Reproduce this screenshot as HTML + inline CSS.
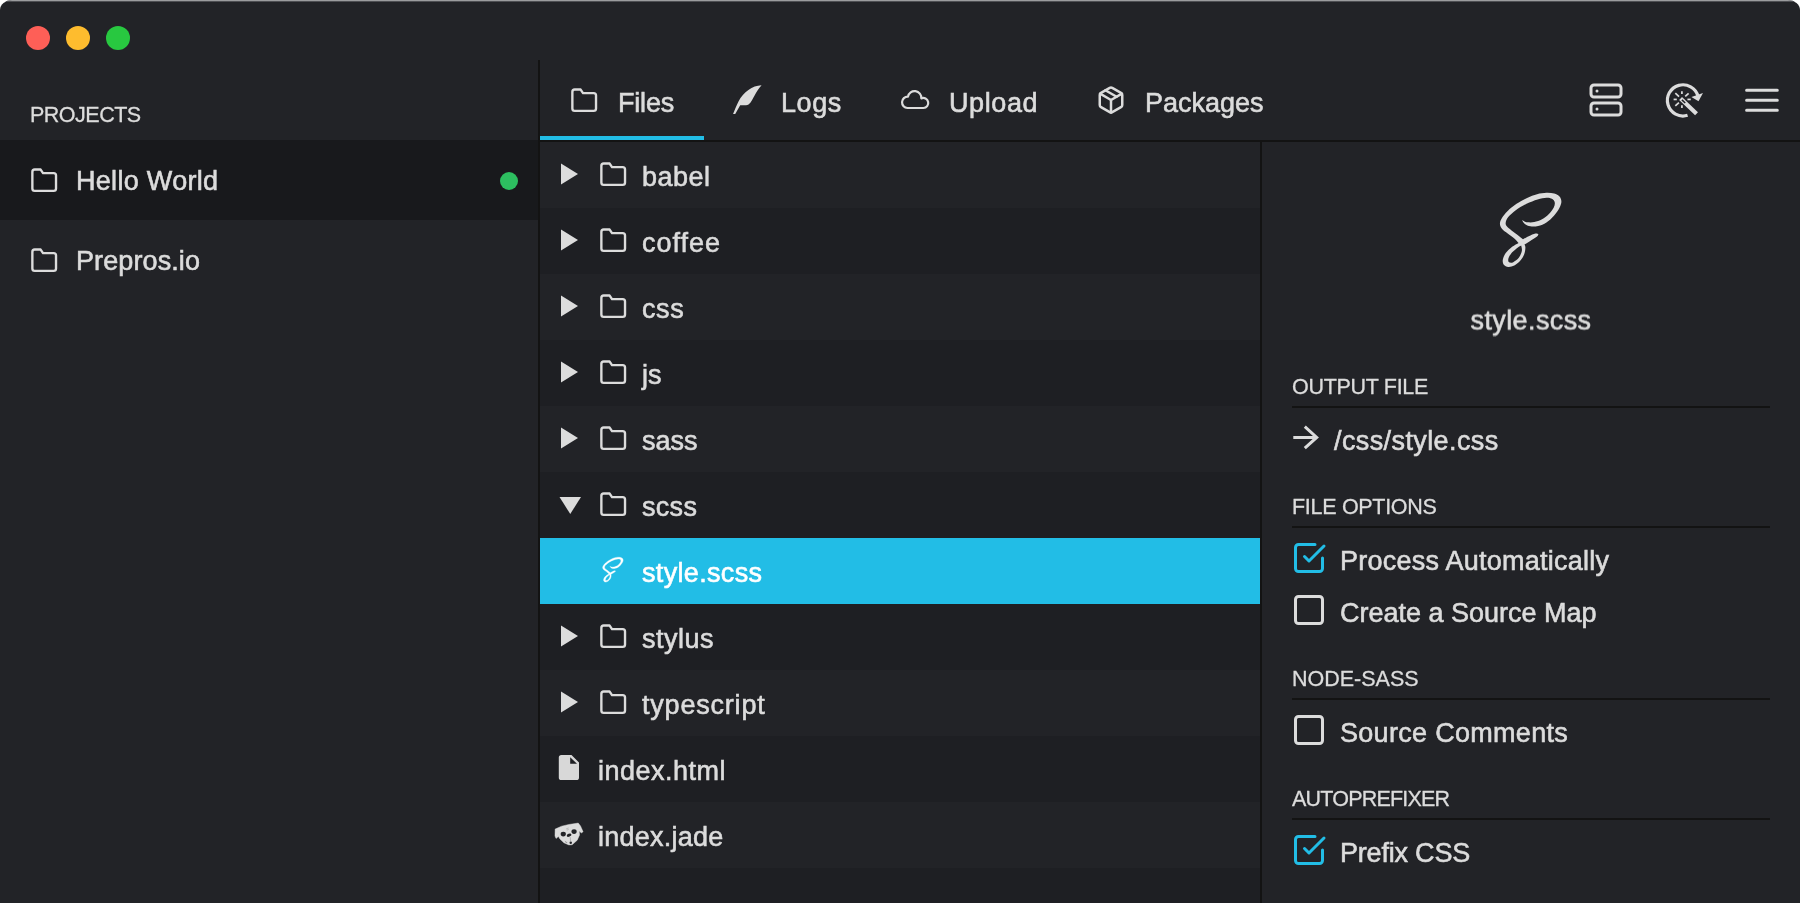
<!DOCTYPE html>
<html lang="en">
<head>
<meta charset="utf-8">
<title>Prepros</title>
<style>
*{box-sizing:border-box;margin:0;padding:0}
html,body{width:1800px;height:903px;overflow:hidden;background:#fff}
body{font-family:"Liberation Sans",sans-serif;color:#dcdcdc;position:relative;font-size:27px;-webkit-text-stroke:0.6px #dcdcdc}
#win{will-change:transform;position:absolute;left:0;top:0;width:1800px;height:920px;background:#222327;border-radius:12px 12px 0 0/10px 10px 0 0;overflow:hidden}
#win:before{content:"";position:absolute;left:0;top:0;width:100%;height:2px;background:linear-gradient(#9b9c9e 0,#9b9c9e 1px,#4e4f53 1px,#4e4f53 2px);z-index:5;pointer-events:none}
.abs{position:absolute}
.t,.opt,.plabel,.sec span,.ctr{transform:translateY(.55px) rotate(.001deg)}
.sec span{display:inline-block}
svg{position:absolute;overflow:visible}
.tl{position:absolute;top:26px;width:24px;height:24px;border-radius:50%}
#side{position:absolute;left:0;top:0;width:538px;height:920px}
#vd1{position:absolute;left:538px;top:60px;width:2px;height:860px;background:#131313}
#vd2{position:absolute;left:1260px;top:142px;width:2px;height:780px;background:#131313}
#hd{position:absolute;left:540px;top:140px;width:1260px;height:2px;background:#131313}
#tabbar{position:absolute;left:540px;top:136px;width:164px;height:4px;background:#22bde6}
.plabel{-webkit-text-stroke-width:.3px;position:absolute;left:30px;top:102px;font-size:21.5px;line-height:24px;letter-spacing:-.5px}
.proj{position:absolute;left:0;width:538px;height:80px}
.proj.sel{background:#18191c}
.proj .t{position:absolute;left:76px;top:24px;line-height:32px;font-size:27px;white-space:nowrap}
.dot{position:absolute;left:499.8px;top:31.7px;width:18.4px;height:18.4px;border-radius:50%;background:#2dbe60}
.tab{position:absolute;top:60px;height:76px}
.tab .t{position:absolute;top:26px;line-height:32px;font-size:27px;white-space:nowrap}
.row{position:absolute;left:540px;width:720px;height:66px}
.row.d{background:#1e1f23}
.row.s{background:#22bde6;color:#fff;-webkit-text-stroke-color:#fff}
.row .t{position:absolute;left:102px;top:18px;line-height:32px;font-size:27px;white-space:nowrap}
.row .f{left:58px}
.sec{-webkit-text-stroke-width:.3px;position:absolute;left:1292px;width:478px;font-size:21.5px;line-height:24px;white-space:nowrap}
.sec i{position:absolute;left:0;top:32px;width:478px;height:2px;background:#131313;display:block}
.opt{position:absolute;left:1340px;font-size:27px;line-height:32px;white-space:nowrap}
.cb{left:1290.8px}
</style>
</head>
<body>
<div id="win">
  <div id="side">
    <div class="tl" style="left:26px;background:#fe5f57"></div>
    <div class="tl" style="left:66px;background:#febc2e"></div>
    <div class="tl" style="left:106px;background:#28c840"></div>
    <div class="plabel">PROJECTS</div>
    <div class="proj sel" style="top:140px">
      <svg  width="28.4" height="28.4" viewBox="0 0 24 24" style="left:29.82px;top:25.64px"><path d="M22 19a2 2 0 0 1-2 2H4a2 2 0 0 1-2-2V5a2 2 0 0 1 2-2h5l2 3h9a2 2 0 0 1 2 2z" fill="none" stroke="#dcdcdc" stroke-width="2" stroke-linecap="round" stroke-linejoin="round"/></svg>
      <div class="t" style="letter-spacing:.3px">Hello World</div>
      <div class="dot"></div>
    </div>
    <div class="proj" style="top:220px">
      <svg  width="28.4" height="28.4" viewBox="0 0 24 24" style="left:29.82px;top:25.64px"><path d="M22 19a2 2 0 0 1-2 2H4a2 2 0 0 1-2-2V5a2 2 0 0 1 2-2h5l2 3h9a2 2 0 0 1 2 2z" fill="none" stroke="#dcdcdc" stroke-width="2" stroke-linecap="round" stroke-linejoin="round"/></svg>
      <div class="t" style="letter-spacing:.1px">Prepros.io</div>
    </div>
  </div>
  <div id="vd1"></div>
  <div class="tab" style="left:540px;width:164px"><svg class="fo" width="28.4" height="28.4" viewBox="0 0 24 24" style="left:29.82px;top:25.54px"><path d="M22 19a2 2 0 0 1-2 2H4a2 2 0 0 1-2-2V5a2 2 0 0 1 2-2h5l2 3h9a2 2 0 0 1 2 2z" fill="none" stroke="#dcdcdc" stroke-width="2" stroke-linecap="round" stroke-linejoin="round"/></svg><div class="t" style="left:78px;letter-spacing:-.2px">Files</div></div>
  <div class="tab" style="left:704px;width:160px"><svg width="60" height="50" viewBox="0 0 1084 903" style="left:16px;top:15px"><path d="M748 186 C 585 190, 425 312, 334 478 C 296 550, 262 640, 236 705 L 275 705 L 365 548 L 470 548 C 540 545, 570 470, 620 380 C 660 300, 700 240, 748 188 Z" fill="#dcdcdc"/></svg><div class="t" style="left:77px;letter-spacing:.6px">Logs</div></div>
  <div class="tab" style="left:864px;width:200px"><svg width="40" height="30" viewBox="0 0 40 30" style="left:34px;top:20px"><path d="M9.5 28A5.7 5.7 0 0 1 10 16.6A6.72 6.72 0 0 1 23.3 18.4A5 5 0 1 1 25.4 28Z" fill="none" stroke="#dcdcdc" stroke-width="2.2" stroke-linejoin="round"/></svg><div class="t" style="left:85px;letter-spacing:.6px">Upload</div></div>
  <div class="tab" style="left:1064px;width:230px"><svg width="30" height="30" viewBox="0 0 24 24" style="left:31.9px;top:25.25px" fill="none" stroke="#dcdcdc" stroke-width="2" stroke-linecap="round" stroke-linejoin="round"><line x1="16.5" y1="9.4" x2="7.5" y2="4.21"/><path d="M21 16V8a2 2 0 0 0-1-1.730l-7-4a2 2 0 0 0-2 0l-7 4A2 2 0 0 0 3 8v8a2 2 0 0 0 1 1.730l7 4a2 2 0 0 0 2 0l7-4A2 2 0 0 0 21 16z"/><polyline points="3.27 6.96 12 12.01 20.73 6.96"/><line x1="12" y1="22.08" x2="12" y2="12"/></svg><div class="t" style="left:81px">Packages</div></div>
  <svg width="36" height="36" viewBox="0 0 24 24" style="left:1588px;top:82.3px" fill="none" stroke="#dcdcdc" stroke-width="2" stroke-linecap="round" stroke-linejoin="round"><rect x="2" y="2" width="20" height="8" rx="2" ry="2"/><rect x="2" y="14" width="20" height="8" rx="2" ry="2"/><line x1="6" y1="6" x2="6.010" y2="6"/><line x1="6" y1="18" x2="6.010" y2="18"/></svg><svg width="60" height="60" viewBox="0 0 903 903" style="left:1655px;top:70px" fill="none" stroke="#dcdcdc">
<path d="M490 682 A235 235 0 1 1 648 395" stroke-width="48"/>
<path d="M722 345L548 405L655 472z" fill="#dcdcdc" stroke="none"/>
<path d="M385 430L625 660" stroke-width="62"/>
<path d="M405 450L455 497" stroke="#222327" stroke-width="22"/>
<g stroke-width="26"><path d="M405 318V360"/><path d="M405 530V572"/><path d="M280 443H328"/><path d="M488 443H538"/><path d="M306 348L362 400"/><path d="M506 350L455 398"/><path d="M306 540L360 492"/></g>
</svg><svg width="60" height="60" viewBox="0 0 60 60" style="left:1730px;top:70px" stroke="#dcdcdc" stroke-width="3" stroke-linecap="round"><path d="M16.6 20.3H47.3M16.6 30.2H47.3M16.6 40.2H47.3"/></svg>
  <div id="tabbar"></div>
  <div id="hd"></div>
  <div class="row " style="top:142px"><svg width="20" height="26" viewBox="0 0 20 26" style="left:20.4px;top:19.5px"><path d="M1 1.4L18 12L1 22.6z" fill="#dcdcdc"/></svg><svg class="fo" width="28.4" height="28.4" viewBox="0 0 24 24" style="left:58.82px;top:17.64px"><path d="M22 19a2 2 0 0 1-2 2H4a2 2 0 0 1-2-2V5a2 2 0 0 1 2-2h5l2 3h9a2 2 0 0 1 2 2z" fill="none" stroke="#dcdcdc" stroke-width="2" stroke-linecap="round" stroke-linejoin="round"/></svg><div class="t" style="letter-spacing:0.5px">babel</div></div>
  <div class="row d" style="top:208px"><svg width="20" height="26" viewBox="0 0 20 26" style="left:20.4px;top:19.5px"><path d="M1 1.4L18 12L1 22.6z" fill="#dcdcdc"/></svg><svg class="fo" width="28.4" height="28.4" viewBox="0 0 24 24" style="left:58.82px;top:17.64px"><path d="M22 19a2 2 0 0 1-2 2H4a2 2 0 0 1-2-2V5a2 2 0 0 1 2-2h5l2 3h9a2 2 0 0 1 2 2z" fill="none" stroke="#dcdcdc" stroke-width="2" stroke-linecap="round" stroke-linejoin="round"/></svg><div class="t" style="letter-spacing:1.0px">coffee</div></div>
  <div class="row " style="top:274px"><svg width="20" height="26" viewBox="0 0 20 26" style="left:20.4px;top:19.5px"><path d="M1 1.4L18 12L1 22.6z" fill="#dcdcdc"/></svg><svg class="fo" width="28.4" height="28.4" viewBox="0 0 24 24" style="left:58.82px;top:17.64px"><path d="M22 19a2 2 0 0 1-2 2H4a2 2 0 0 1-2-2V5a2 2 0 0 1 2-2h5l2 3h9a2 2 0 0 1 2 2z" fill="none" stroke="#dcdcdc" stroke-width="2" stroke-linecap="round" stroke-linejoin="round"/></svg><div class="t" style="letter-spacing:0.6px">css</div></div>
  <div class="row d" style="top:340px"><svg width="20" height="26" viewBox="0 0 20 26" style="left:20.4px;top:19.5px"><path d="M1 1.4L18 12L1 22.6z" fill="#dcdcdc"/></svg><svg class="fo" width="28.4" height="28.4" viewBox="0 0 24 24" style="left:58.82px;top:17.64px"><path d="M22 19a2 2 0 0 1-2 2H4a2 2 0 0 1-2-2V5a2 2 0 0 1 2-2h5l2 3h9a2 2 0 0 1 2 2z" fill="none" stroke="#dcdcdc" stroke-width="2" stroke-linecap="round" stroke-linejoin="round"/></svg><div class="t" style="letter-spacing:0px">js</div></div>
  <div class="row " style="top:406px"><svg width="20" height="26" viewBox="0 0 20 26" style="left:20.4px;top:19.5px"><path d="M1 1.4L18 12L1 22.6z" fill="#dcdcdc"/></svg><svg class="fo" width="28.4" height="28.4" viewBox="0 0 24 24" style="left:58.82px;top:17.64px"><path d="M22 19a2 2 0 0 1-2 2H4a2 2 0 0 1-2-2V5a2 2 0 0 1 2-2h5l2 3h9a2 2 0 0 1 2 2z" fill="none" stroke="#dcdcdc" stroke-width="2" stroke-linecap="round" stroke-linejoin="round"/></svg><div class="t" style="letter-spacing:0px">sass</div></div>
  <div class="row d" style="top:472px"><svg width="24" height="20" viewBox="0 0 24 20" style="left:19px;top:24px"><path d="M.5 1H22L11.25 18z" fill="#dcdcdc"/></svg><svg class="fo" width="28.4" height="28.4" viewBox="0 0 24 24" style="left:58.82px;top:17.64px"><path d="M22 19a2 2 0 0 1-2 2H4a2 2 0 0 1-2-2V5a2 2 0 0 1 2-2h5l2 3h9a2 2 0 0 1 2 2z" fill="none" stroke="#dcdcdc" stroke-width="2" stroke-linecap="round" stroke-linejoin="round"/></svg><div class="t" style="letter-spacing:0.3px">scss</div></div>
  <div class="row s" style="top:538px"><svg class="abs" width="33.33" height="33.33" viewBox="0 0 903 903" style="left:56.07px;top:15.47px"><path d="M378.0 362.0C382.5 368.0 392.2 388.7 405.0 398.0C417.8 407.3 435.0 415.2 455.0 418.0C475.0 420.8 500.8 420.8 525.0 415.0C549.2 409.2 576.2 398.5 600.0 383.0C623.8 367.5 648.3 344.2 668.0 322.0C687.7 299.8 706.8 271.2 718.0 250.0C729.2 228.8 735.0 212.0 735.0 195.0C735.0 178.0 728.8 160.2 718.0 148.0C707.2 135.8 689.7 127.5 670.0 122.0C650.3 116.5 625.8 114.0 600.0 115.0C574.2 116.0 544.2 120.2 515.0 128.0C485.8 135.8 455.8 147.5 425.0 162.0C394.2 176.5 359.2 195.3 330.0 215.0C300.8 234.7 272.2 258.3 250.0 280.0C227.8 301.7 208.7 325.8 197.0 345.0C185.3 364.2 179.8 379.2 180.0 395.0C180.2 410.8 186.3 425.3 198.0 440.0C209.7 454.7 231.3 468.3 250.0 483.0C268.7 497.7 293.7 513.8 310.0 528.0C326.3 542.2 341.7 561.3 348.0 568.0C338.3 573.8 309.3 587.7 290.0 603.0C270.7 618.3 246.0 640.5 232.0 660.0C218.0 679.5 208.8 702.5 206.0 720.0C203.2 737.5 206.8 754.2 215.0 765.0C223.2 775.8 239.2 783.7 255.0 785.0C270.8 786.3 291.7 782.5 310.0 773.0C328.3 763.5 350.0 745.5 365.0 728.0C380.0 710.5 392.5 687.7 400.0 668.0C407.5 648.3 409.7 624.3 410.0 610.0C410.3 595.7 403.3 586.7 402.0 582.0C410.0 577.0 431.2 564.0 450.0 552.0C468.8 540.0 502.2 520.8 515.0 510.0C527.8 499.2 525.0 490.8 527.0 487.0C522.5 486.3 514.5 479.7 500.0 483.0C485.5 486.3 458.7 498.3 440.0 507.0C421.3 515.7 396.7 530.3 388.0 535.0C380.0 528.7 357.2 510.3 340.0 497.0C322.8 483.7 301.3 468.2 285.0 455.0C268.7 441.8 250.8 429.7 242.0 418.0C233.2 406.3 229.8 398.8 232.0 385.0C234.2 371.2 240.3 353.3 255.0 335.0C269.7 316.7 292.5 295.0 320.0 275.0C347.5 255.0 386.7 231.7 420.0 215.0C453.3 198.3 490.0 184.2 520.0 175.0C550.0 165.8 578.3 160.8 600.0 160.0C621.7 159.2 637.5 162.8 650.0 170.0C662.5 177.2 672.5 189.7 675.0 203.0C677.5 216.3 674.2 232.2 665.0 250.0C655.8 267.8 637.5 292.5 620.0 310.0C602.5 327.5 581.7 343.3 560.0 355.0C538.3 366.7 511.7 375.5 490.0 380.0C468.3 384.5 445.3 383.3 430.0 382.0C414.7 380.7 406.7 375.3 398.0 372.0C389.3 368.7 381.3 363.7 378.0 362.0ZM372.0 592.0C373.0 600.0 381.3 622.0 378.0 640.0C374.7 658.0 365.0 683.0 352.0 700.0C339.0 717.0 315.0 735.0 300.0 742.0C285.0 749.0 269.3 747.0 262.0 742.0C254.7 737.0 253.0 724.8 256.0 712.0C259.0 699.2 267.7 680.7 280.0 665.0C292.3 649.3 314.7 630.2 330.0 618.0C345.3 605.8 365.0 596.3 372.0 592.0Z" fill="#fff" fill-rule="evenodd" stroke="#fff" stroke-width="10"/></svg><div class="t" style="letter-spacing:0.33px">style.scss</div></div>
  <div class="row d" style="top:604px"><svg width="20" height="26" viewBox="0 0 20 26" style="left:20.4px;top:19.5px"><path d="M1 1.4L18 12L1 22.6z" fill="#dcdcdc"/></svg><svg class="fo" width="28.4" height="28.4" viewBox="0 0 24 24" style="left:58.82px;top:17.64px"><path d="M22 19a2 2 0 0 1-2 2H4a2 2 0 0 1-2-2V5a2 2 0 0 1 2-2h5l2 3h9a2 2 0 0 1 2 2z" fill="none" stroke="#dcdcdc" stroke-width="2" stroke-linecap="round" stroke-linejoin="round"/></svg><div class="t" style="letter-spacing:0.5px">stylus</div></div>
  <div class="row " style="top:670px"><svg width="20" height="26" viewBox="0 0 20 26" style="left:20.4px;top:19.5px"><path d="M1 1.4L18 12L1 22.6z" fill="#dcdcdc"/></svg><svg class="fo" width="28.4" height="28.4" viewBox="0 0 24 24" style="left:58.82px;top:17.64px"><path d="M22 19a2 2 0 0 1-2 2H4a2 2 0 0 1-2-2V5a2 2 0 0 1 2-2h5l2 3h9a2 2 0 0 1 2 2z" fill="none" stroke="#dcdcdc" stroke-width="2" stroke-linecap="round" stroke-linejoin="round"/></svg><div class="t" style="letter-spacing:0.8px">typescript</div></div>
  <div class="row d" style="top:736px"><svg width="24" height="28" viewBox="0 0 24 28" style="left:17px;top:18px"><path d="M4.4 1H14.5L22 8.5V23.5a2.6 2.6 0 0 1-2.6 2.6H4.4a2.6 2.6 0 0 1-2.6-2.6V3.6A2.6 2.6 0 0 1 4.4 1z" fill="#d8d8d8"/><path d="M13.2 3.2V9.8H20z" fill="#1e1f23"/></svg><div class="t f" style="letter-spacing:0.5px">index.html</div></div>
  <div class="row " style="top:802px"><svg width="50" height="50" viewBox="0 0 903 903" style="left:5px;top:8px"><path d="M183 345L300 292L430 262L490 252L600 236L642 290L688 395L655 414L618 378L624 450L582 545L490 628L430 630L340 592L270 525L243 478L200 514L180 470z" fill="#dcdcdc" stroke="#dcdcdc" stroke-width="8" stroke-linejoin="round"/><ellipse cx="330" cy="435" rx="47" ry="44" fill="#222327"/><ellipse cx="525" cy="390" rx="47" ry="44" fill="#222327"/><ellipse cx="435" cy="455" rx="44" ry="27" transform="rotate(-22 435 455)" fill="#222327"/><path d="M455 490L462 560" stroke="#7a7a7c" stroke-width="8"/><path d="M380 345l45-22M395 365l35-18" stroke="#8a8a8c" stroke-width="8"/><circle cx="465" cy="592" r="22" fill="#222327"/><path d="M360 565q20 25 40 22" stroke="#55565a" stroke-width="10" fill="none"/></svg><div class="t f" style="letter-spacing:0.25px">index.jade</div></div>
  <div class="row d" style="top:868px"></div>
  <div id="vd2"></div>
  <svg class="abs" width="100" height="100" viewBox="0 0 903 903" style="left:1480px;top:180px"><path d="M378.0 362.0C382.5 368.0 392.2 388.7 405.0 398.0C417.8 407.3 435.0 415.2 455.0 418.0C475.0 420.8 500.8 420.8 525.0 415.0C549.2 409.2 576.2 398.5 600.0 383.0C623.8 367.5 648.3 344.2 668.0 322.0C687.7 299.8 706.8 271.2 718.0 250.0C729.2 228.8 735.0 212.0 735.0 195.0C735.0 178.0 728.8 160.2 718.0 148.0C707.2 135.8 689.7 127.5 670.0 122.0C650.3 116.5 625.8 114.0 600.0 115.0C574.2 116.0 544.2 120.2 515.0 128.0C485.8 135.8 455.8 147.5 425.0 162.0C394.2 176.5 359.2 195.3 330.0 215.0C300.8 234.7 272.2 258.3 250.0 280.0C227.8 301.7 208.7 325.8 197.0 345.0C185.3 364.2 179.8 379.2 180.0 395.0C180.2 410.8 186.3 425.3 198.0 440.0C209.7 454.7 231.3 468.3 250.0 483.0C268.7 497.7 293.7 513.8 310.0 528.0C326.3 542.2 341.7 561.3 348.0 568.0C338.3 573.8 309.3 587.7 290.0 603.0C270.7 618.3 246.0 640.5 232.0 660.0C218.0 679.5 208.8 702.5 206.0 720.0C203.2 737.5 206.8 754.2 215.0 765.0C223.2 775.8 239.2 783.7 255.0 785.0C270.8 786.3 291.7 782.5 310.0 773.0C328.3 763.5 350.0 745.5 365.0 728.0C380.0 710.5 392.5 687.7 400.0 668.0C407.5 648.3 409.7 624.3 410.0 610.0C410.3 595.7 403.3 586.7 402.0 582.0C410.0 577.0 431.2 564.0 450.0 552.0C468.8 540.0 502.2 520.8 515.0 510.0C527.8 499.2 525.0 490.8 527.0 487.0C522.5 486.3 514.5 479.7 500.0 483.0C485.5 486.3 458.7 498.3 440.0 507.0C421.3 515.7 396.7 530.3 388.0 535.0C380.0 528.7 357.2 510.3 340.0 497.0C322.8 483.7 301.3 468.2 285.0 455.0C268.7 441.8 250.8 429.7 242.0 418.0C233.2 406.3 229.8 398.8 232.0 385.0C234.2 371.2 240.3 353.3 255.0 335.0C269.7 316.7 292.5 295.0 320.0 275.0C347.5 255.0 386.7 231.7 420.0 215.0C453.3 198.3 490.0 184.2 520.0 175.0C550.0 165.8 578.3 160.8 600.0 160.0C621.7 159.2 637.5 162.8 650.0 170.0C662.5 177.2 672.5 189.7 675.0 203.0C677.5 216.3 674.2 232.2 665.0 250.0C655.8 267.8 637.5 292.5 620.0 310.0C602.5 327.5 581.7 343.3 560.0 355.0C538.3 366.7 511.7 375.5 490.0 380.0C468.3 384.5 445.3 383.3 430.0 382.0C414.7 380.7 406.7 375.3 398.0 372.0C389.3 368.7 381.3 363.7 378.0 362.0ZM372.0 592.0C373.0 600.0 381.3 622.0 378.0 640.0C374.7 658.0 365.0 683.0 352.0 700.0C339.0 717.0 315.0 735.0 300.0 742.0C285.0 749.0 269.3 747.0 262.0 742.0C254.7 737.0 253.0 724.8 256.0 712.0C259.0 699.2 267.7 680.7 280.0 665.0C292.3 649.3 314.7 630.2 330.0 618.0C345.3 605.8 365.0 596.3 372.0 592.0Z" fill="#dcdcdc" fill-rule="evenodd" stroke="#dcdcdc" stroke-width="0"/></svg>
  <div class="abs ctr" style="left:1262px;top:304px;width:538px;text-align:center;font-size:27px;line-height:32px;letter-spacing:.4px">style.scss</div>
  <div class="sec" style="top:374px;letter-spacing:-.3px"><span>OUTPUT FILE</span><i></i></div>
  <svg width="40" height="40" viewBox="0 0 40 40" style="left:1280px;top:417px" fill="none" stroke="#dcdcdc" stroke-width="3"><path d="M13.3 20.4H37M24.8 9.7L36.7 20.4L24.8 31.1" stroke-linejoin="miter"/></svg>
  <div class="opt" style="left:1334px;top:424px;letter-spacing:.4px">/css/style.css</div>
  <div class="sec" style="top:494px;letter-spacing:-.3px"><span>FILE OPTIONS</span><i></i></div>
  <svg class="cb" width="36" height="36" viewBox="0 0 24 24" style="top:539.8px" fill="none" stroke="#22bde6" stroke-width="2" stroke-linecap="round" stroke-linejoin="round"><polyline points="9 11 12 14 22 4"/><path d="M21 12v7a2 2 0 0 1-2 2H5a2 2 0 0 1-2-2V5a2 2 0 0 1 2-2h11"/></svg><div class="opt" style="top:544px;letter-spacing:.25px">Process Automatically</div>
  <svg class="cb" width="36" height="36" viewBox="0 0 24 24" style="top:591.8px" fill="none" stroke="#dcdcdc" stroke-width="2" stroke-linecap="round" stroke-linejoin="round"><rect x="3" y="3" width="18" height="18" rx="2" ry="2"/></svg><div class="opt" style="top:596px">Create a Source Map</div>
  <div class="sec" style="top:666px;letter-spacing:0px"><span>NODE-SASS</span><i></i></div>
  <svg class="cb" width="36" height="36" viewBox="0 0 24 24" style="top:711.8px" fill="none" stroke="#dcdcdc" stroke-width="2" stroke-linecap="round" stroke-linejoin="round"><rect x="3" y="3" width="18" height="18" rx="2" ry="2"/></svg><div class="opt" style="top:716px;letter-spacing:.3px">Source Comments</div>
  <div class="sec" style="top:786px;letter-spacing:-.8px"><span>AUTOPREFIXER</span><i></i></div>
  <svg class="cb" width="36" height="36" viewBox="0 0 24 24" style="top:831.8px" fill="none" stroke="#22bde6" stroke-width="2" stroke-linecap="round" stroke-linejoin="round"><polyline points="9 11 12 14 22 4"/><path d="M21 12v7a2 2 0 0 1-2 2H5a2 2 0 0 1-2-2V5a2 2 0 0 1 2-2h11"/></svg><div class="opt" style="top:836px;letter-spacing:-.2px">Prefix CSS</div>
</div>
</body>
</html>
